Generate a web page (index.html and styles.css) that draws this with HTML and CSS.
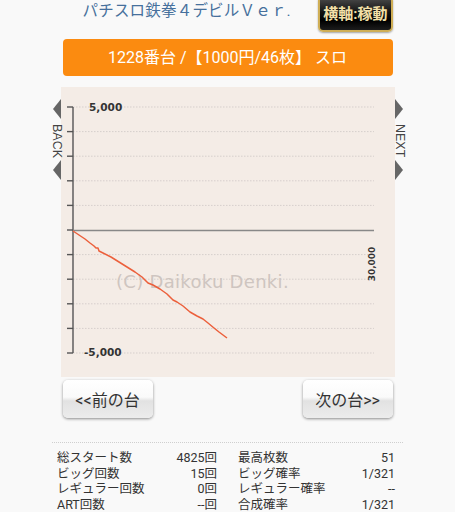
FILE: index.html
```html
<!DOCTYPE html>
<html lang="ja">
<head>
<meta charset="utf-8">
<title>パチスロ鉄拳４デビルＶｅｒ.</title>
<link rel="stylesheet" href="styles.css">
</head>
<body>
<div class="wrap">
  <header class="head">
    <h1 class="title">パチスロ鉄拳４デビルＶｅｒ.</h1>
    <div class="badge">横軸:稼動</div>
  </header>
  <div class="machine">1228番台 /【1000円/46枚】 スロ</div>
  <div class="chart">
    <div class="side side-back">
      <span class="tri tri-left"></span>
      <span class="side-text">BACK</span>
      <span class="tri tri-left"></span>
    </div>
    <div class="side side-next">
      <span class="tri tri-right"></span>
      <span class="side-text">NEXT</span>
      <span class="tri tri-right"></span>
    </div>
    <svg class="plot" width="334" height="290" viewBox="0 0 334 290">
      <g class="grid">
        <line x1="12" y1="20" x2="313" y2="20"/>
        <line x1="12" y1="44.6" x2="313" y2="44.6"/>
        <line x1="12" y1="69.2" x2="313" y2="69.2"/>
        <line x1="12" y1="93.8" x2="313" y2="93.8"/>
        <line x1="12" y1="118.4" x2="313" y2="118.4"/>
        <line x1="12" y1="167.6" x2="313" y2="167.6"/>
        <line x1="12" y1="192.2" x2="313" y2="192.2"/>
        <line x1="12" y1="216.8" x2="313" y2="216.8"/>
        <line x1="12" y1="241.4" x2="313" y2="241.4"/>
        <line x1="12" y1="266" x2="313" y2="266"/>
      </g>
      <text class="wm" x="55" y="201">(C) Daikoku Denki.</text>
      <g class="ticks">
        <line x1="6" y1="20" x2="12" y2="20"/>
        <line x1="6" y1="44.6" x2="12" y2="44.6"/>
        <line x1="6" y1="69.2" x2="12" y2="69.2"/>
        <line x1="6" y1="93.8" x2="12" y2="93.8"/>
        <line x1="6" y1="118.4" x2="12" y2="118.4"/>
        <line x1="6" y1="143" x2="12" y2="143"/>
        <line x1="6" y1="167.6" x2="12" y2="167.6"/>
        <line x1="6" y1="192.2" x2="12" y2="192.2"/>
        <line x1="6" y1="216.8" x2="12" y2="216.8"/>
        <line x1="6" y1="241.4" x2="12" y2="241.4"/>
        <line x1="6" y1="266" x2="12" y2="266"/>
        <line x1="12" y1="20" x2="12" y2="266"/>
      </g>
      <line class="zero" x1="12" y1="143.5" x2="313" y2="143.5"/>
      <text class="lbl" x="28" y="24">5,000</text>
      <text class="lbl" x="23" y="269">-5,000</text>
      <text class="lbl lbl-x" transform="translate(314,177) rotate(-90)" text-anchor="middle">30,000</text>
      <polyline class="data" points="12,144 18,148 24,152 29,156 33,159 35,161 37,161 38,164 42,166 50,170 58,175 66,180 74,185 81,190 87,196 92,198 99,202 106,207 112,213 116,215 122,219 129,225 136,229 142,232 147,236 153,241 158,245 162,248 166,251"/>
    </svg>
  </div>
  <div class="nav">
    <button class="btn" type="button">&lt;&lt;前の台</button>
    <button class="btn" type="button">次の台&gt;&gt;</button>
  </div>
</div>
<div class="stats">
  <div class="k">総スタート数</div><div class="v">4825回</div><div class="k k2">最高枚数</div><div class="v">51</div>
  <div class="k">ビッグ回数</div><div class="v">15回</div><div class="k k2">ビッグ確率</div><div class="v">1/321</div>
  <div class="k">レギュラー回数</div><div class="v">0回</div><div class="k k2">レギュラー確率</div><div class="v">--</div>
  <div class="k">ART回数</div><div class="v">--回</div><div class="k k2">合成確率</div><div class="v">1/321</div>
</div>
</body>
</html>
```
FILE: styles.css
```css
* { box-sizing: border-box; }
html, body { margin: 0; padding: 0; }
body {
  background: #f9f9f9;
  font-family: Roboto, "Noto Sans CJK JP", sans-serif;
  color: #333;
  width: 455px;
  overflow: hidden;
}
.wrap {
  width: 330px;
  margin: 0 auto;
}
.head {
  display: flex;
  justify-content: space-between;
  align-items: flex-start;
  height: 33px;
  padding-left: 20px;
}
.title {
  margin: 0;
  padding-top: 1px;
  font-weight: normal;
  font-size: 15.5px;
  line-height: 20px;
  color: #46709c;
  letter-spacing: 0.2px;
}
.badge {
  margin-top: -4px;
  height: 36px;
  padding: 3px 3px 0;
  border: 2px solid #cfae55;
  border-radius: 5px;
  background: linear-gradient(#4a4a4a, #111 45%, #000 70%, #1c1c1c);
  color: #f2e0a8;
  font-weight: bold;
  font-size: 15px;
  line-height: 26px;
  box-shadow: 0 1px 2px rgba(0,0,0,.35);
}
.machine {
  margin-top: 6px;
  height: 37px;
  background: #fb8b10;
  border-radius: 4px;
  color: #fff;
  font-size: 16px;
  line-height: 37px;
  text-align: center;
}
.chart {
  position: relative;
  margin: 11px -2px 0;
  height: 290px;
  background: #f4ece6;
}
.plot { display: block; }
.grid line { stroke: #d6cfcc; stroke-width: 1; stroke-dasharray: 1.5 1.5; }
.ticks line { stroke: #555; stroke-width: 1.4; }
.zero { stroke: #888; stroke-width: 1.5; }
.lbl {
  font-family: "DejaVu Sans", sans-serif;
  font-weight: bold;
  font-size: 10.5px;
  fill: #333;
}
.lbl-x { font-size: 9px; }
.wm {
  font-family: "DejaVu Sans", sans-serif;
  font-size: 18px;
  letter-spacing: 0.3px;
  fill: #cec5c0;
}
.data { fill: none; stroke: #ec603c; stroke-width: 1.5; stroke-linejoin: round; }
.side {
  position: absolute;
  top: 12px;
  width: 9px;
  display: flex;
  flex-direction: column;
  align-items: center;
}
.side-back { left: -9px; }
.side-next { right: -9px; }
.tri { width: 0; height: 0; border-top: 10px solid transparent; border-bottom: 10px solid transparent; }
.tri-left { border-right: 8px solid #666; margin-left: 1px; }
.tri-right { border-left: 8px solid #666; margin-right: 1px; }
.side-text {
  writing-mode: vertical-rl;
  font-family: "Liberation Sans", Arial, sans-serif;
  font-size: 12.5px;
  line-height: 9px;
  color: #444;
  height: 41px;
  text-align: center;
  padding-top: 3px;
}
.nav {
  margin-top: 3px;
  display: flex;
  justify-content: space-between;
}
.btn {
  width: 90px;
  height: 38px;
  padding: 0;
  border: 0;
  border-radius: 5px;
  background: linear-gradient(#fff, #fafafa 45%, #e2e2e2 55%, #ececec);
  box-shadow: 0 1px 3px rgba(0,0,0,.45);
  font-family: Roboto, "Noto Sans CJK JP", sans-serif;
  font-size: 16px;
  color: #333;
}
.stats {
  margin: 24px 52px 0;
  padding: 7px 8px 0 5px;
  border-top: 1px dotted #cfcfcf;
  display: grid;
  grid-template-columns: 95px 65px 110px 68px;
  font-size: 12.5px;
  line-height: 15.5px;
  color: #333;
}
.k { white-space: nowrap; }
.v { text-align: right; white-space: nowrap; }
.k2 { padding-left: 21px; }
```
